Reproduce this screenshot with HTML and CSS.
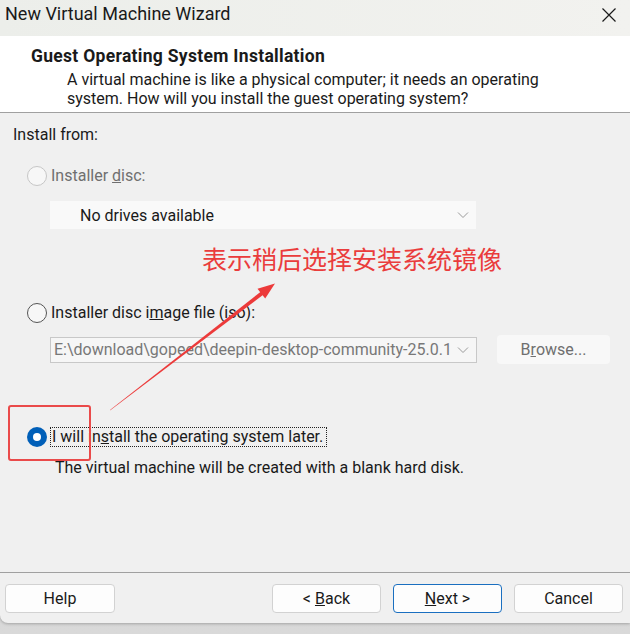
FILE: index.html
```html
<!DOCTYPE html>
<html>
<head>
<meta charset="utf-8">
<link rel="stylesheet" href="styles.css">
</head>
<body>
<div class="window">
  <div class="titlebar">
    <span class="title">New Virtual Machine Wizard</span>
    <svg class="close" width="16" height="16" viewBox="0 0 16 16"><path d="M1.5 1.5 L14.5 14.5 M14.5 1.5 L1.5 14.5" stroke="#1a1a1a" stroke-width="1.2" fill="none"/></svg>
  </div>
  <div class="header">
    <div class="h-title">Guest Operating System Installation</div>
    <div class="h-desc">A virtual machine is like a physical computer; it needs an operating<br>system. How will you install the guest operating system?</div>
  </div>
  <div class="body">
    <div class="install-from">Install from:</div>
    <div class="radio-row disabled r1">
      <span class="radio off dis"></span>
      <span class="label">Installer <u>d</u>isc:</span>
    </div>
    <div class="dropdown">
      <span class="dd-text">No drives available</span>
      <svg class="chev" width="12" height="8" viewBox="0 0 12 8"><path d="M1 1.5 L6 6.5 L11 1.5" stroke="#9a9a9a" stroke-width="1" fill="none"/></svg>
    </div>
    <div class="radio-row r2">
      <span class="radio off"></span>
      <span class="label">Installer disc i<u>m</u>age file (iso):</span>
    </div>
    <div class="combo-row">
      <div class="combo">
        <span class="combo-text">E:\download\gopeed\deepin-desktop-community-25.0.1</span>
        <svg class="chev" width="12" height="8" viewBox="0 0 12 8"><path d="M1 1.5 L6 6.5 L11 1.5" stroke="#9a9a9a" stroke-width="1" fill="none"/></svg>
      </div>
      <div class="browse">B<u>r</u>owse...</div>
    </div>
    <div class="radio-row r3">
      <span class="radio on"></span>
      <span class="label focus">I will in<u>s</u>tall the operating system later.</span>
    </div>
    <div class="later-desc">The virtual machine will be created with a blank hard disk.</div>
  </div>
  <div class="footer">
    <button class="btn help">Help</button>
    <div class="btn-group">
      <button class="btn">&lt; <u>B</u>ack</button>
      <button class="btn primary"><u>N</u>ext &gt;</button>
      <button class="btn">Cancel</button>
    </div>
  </div>
</div>
<div class="note">表示稍后选择安装系统镜像</div>
<div class="redbox"></div>
<svg class="arrow" width="630" height="634" viewBox="0 0 630 634">
  <polygon points="110,410.4 110.3,409.7 262.3,290.6 264.6,293.7" fill="#ec3a3a"/>
  <polygon points="275,283.5 257.5,288.8 265.2,298.6" fill="#ec3a3a"/>
</svg>
</body>
</html>
```
FILE: styles.css
```css
* { box-sizing: border-box; }
html, body { margin: 0; padding: 0; }
body {
  width: 630px;
  height: 634px;
  overflow: hidden;
  background: linear-gradient(#c9c9c9, #d9d9d9);
  font-family: Roboto, "Noto Sans", sans-serif;
  color: #1a1a1a;
  position: relative;
}
.window {
  width: 630px;
  height: 623px;
  background: #f0f0f0;
  display: flex;
  flex-direction: column;
  border-bottom-left-radius: 8px;
  box-shadow: 0 1px 3px rgba(0,0,0,0.25);
}
.titlebar {
  height: 36px;
  background: linear-gradient(90deg, #eceeea, #f2f2ef);
  display: flex;
  align-items: center;
  justify-content: space-between;
  padding: 0 13px 0 5px;
}
.title { font-size: 18px; color: #1a1a1a; margin-top: -9px; }
.close { margin-top: -7px; }
.header {
  height: 77px;
  background: #ffffff;
  border-bottom: 1px solid #a0a0a0;
  padding: 10px 0 0 31px;
}
.h-title { font-size: 17.5px; font-weight: bold; line-height: 20px; letter-spacing: 0.3px; }
.h-desc { font-size: 16px; line-height: 19px; margin: 4px 0 0 36px; }
.body {
  flex: 1;
  padding-left: 13px;
  font-size: 16px;
}
.install-from { line-height: 20px; margin-top: 12px; }
.radio-row {
  display: flex;
  align-items: center;
  height: 20px;
  margin-left: 14px;
  gap: 4px;
}
.r1 { margin-top: 21px; }
.r2 { margin-top: 74px; }
.r3 { margin-top: 63px; }
.radio {
  width: 20px;
  height: 20px;
  border-radius: 50%;
  display: inline-block;
  flex: none;
}
.radio.off { border: 1px solid #555555; background: #f7f7f7; }
.radio.off.dis { border-color: #c6c6c6; background: #f7f7f7; }
.radio.on { background: #005fb8; display: flex; align-items: center; justify-content: center; }
.radio.on::after {
  content: "";
  width: 8px;
  height: 8px;
  border-radius: 50%;
  background: #ffffff;
}
.disabled .label { color: #6f6f6f; }
.label { line-height: 18px; }
.label.focus { border: 1px dotted #222; padding: 0 3px 0 1px; margin-left: -1px; line-height: 18px; }
.dropdown {
  margin: 15px 0 0 37px;
  width: 426px;
  height: 28px;
  background: #f9f9f9;
  display: flex;
  align-items: center;
  justify-content: space-between;
  padding: 0 7px 0 30px;
}
.dd-text { color: #1a1a1a; }
.combo-row {
  display: flex;
  align-items: center;
  margin: 12px 0 0 37px;
  gap: 20px;
}
.combo {
  width: 427px;
  height: 26px;
  border: 1px solid #c8c8c8;
  background: #f6f6f6;
  display: flex;
  align-items: center;
  justify-content: space-between;
  padding: 0 7px 0 3px;
}
.combo-text {
  white-space: nowrap;
  color: #787878;
}
.browse {
  width: 113px;
  height: 29px;
  background: #f8f8f8;
  border-radius: 4px;
  display: flex;
  align-items: center;
  justify-content: center;
  color: #6f6f6f;
}
.later-desc { margin: 11px 0 0 42px; line-height: 20px; }
.footer {
  border-top: 1px solid #a0a0a0;
  padding: 11px 7px 10px 5px;
  display: flex;
  justify-content: space-between;
}
.btn-group { display: flex; gap: 12px; }
.btn {
  width: 109px;
  height: 29px;
  font-family: Roboto, "Noto Sans", sans-serif;
  font-size: 16px;
  color: #1a1a1a;
  background: #fdfdfd;
  border: 1px solid #d2d2d2;
  border-radius: 4px;
  padding: 0;
}
.btn.help { width: 110px; }
.btn.primary { border-color: #1a6fc0; }
.note {
  position: absolute;
  left: 202px;
  top: 243px;
  font-family: "Noto Sans CJK SC", sans-serif;
  font-size: 25px;
  line-height: 30px;
  color: #ea3c3c;
  white-space: nowrap;
}
.redbox {
  position: absolute;
  left: 8px;
  top: 405px;
  width: 83px;
  height: 56px;
  border: 2px solid #ea4a4a;
  border-radius: 3px;
}
.arrow { position: absolute; left: 0; top: 0; pointer-events: none; }
```
